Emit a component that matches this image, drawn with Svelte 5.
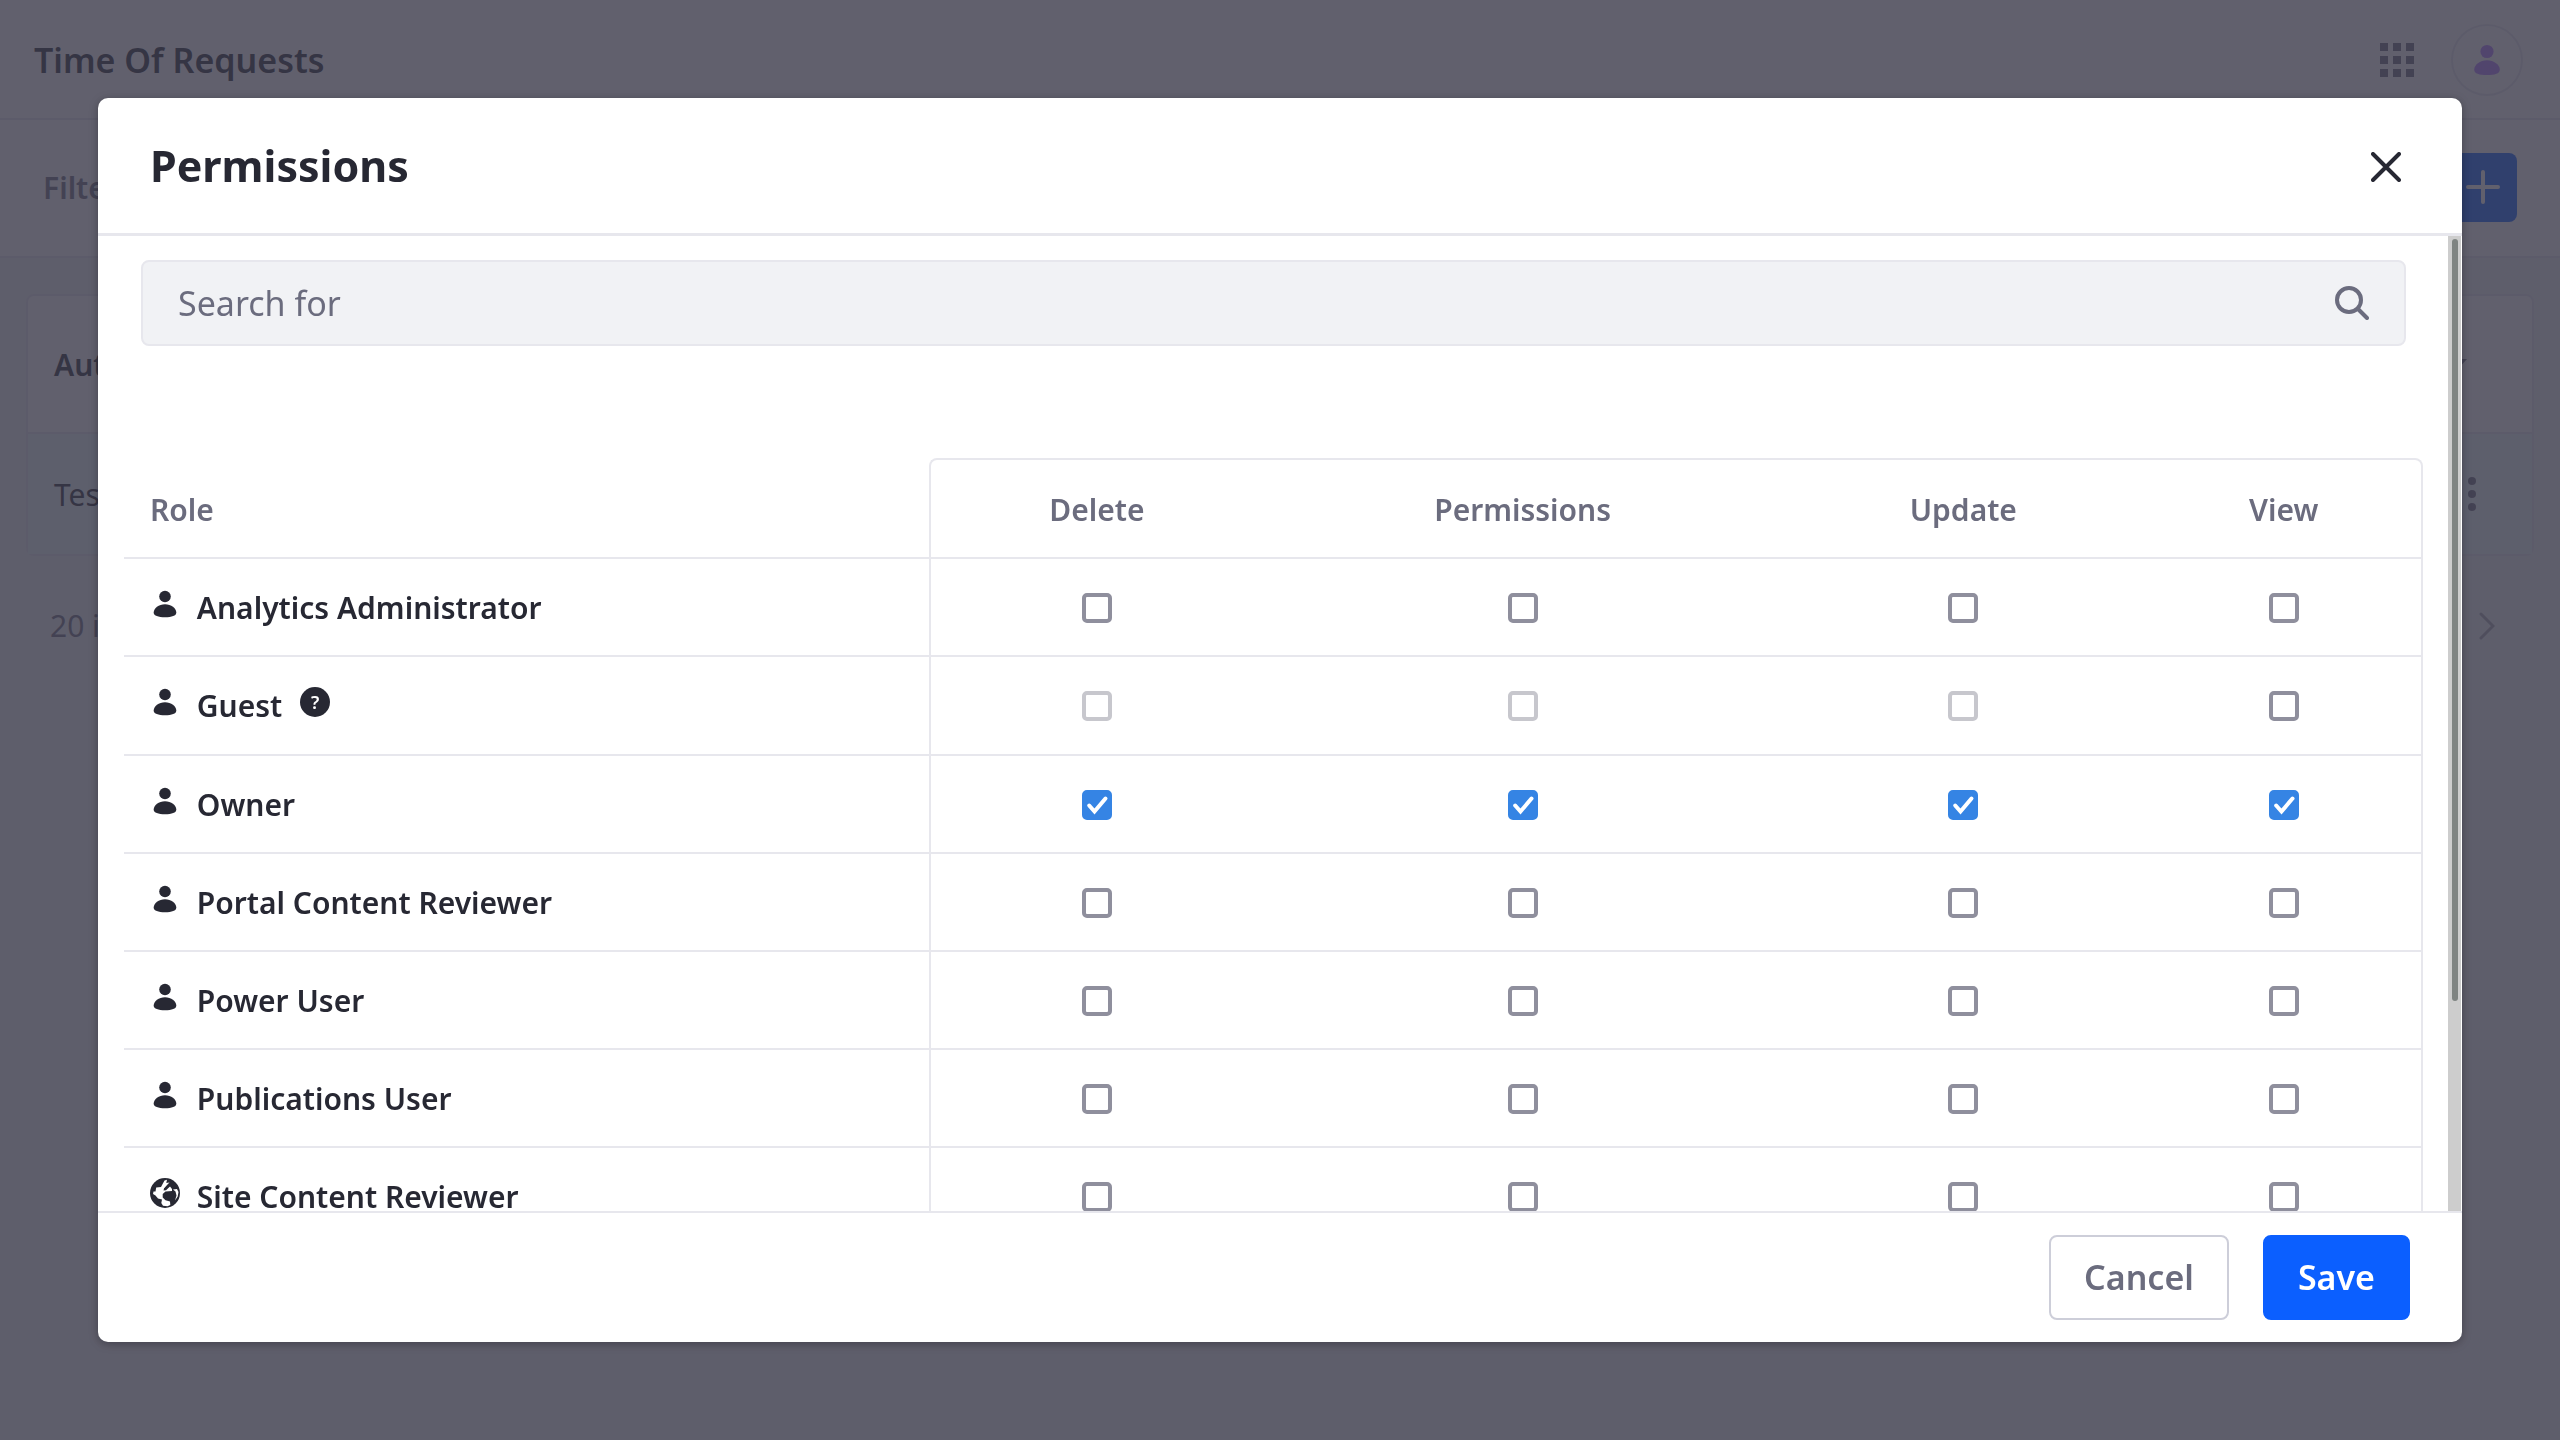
<script lang="ts">
	const actions = ['Delete', 'Permissions', 'Update', 'View'];

	type Role = {
		name: string;
		icon: 'user' | 'globe';
		help?: boolean;
		checked: boolean[];
		locked: boolean[];
	};

	const none = () => [false, false, false, false];

	let roles = $state<Role[]>([
		{ name: 'Analytics Administrator', icon: 'user', checked: none(), locked: none() },
		{ name: 'Guest', icon: 'user', help: true, checked: none(), locked: [true, true, true, false] },
		{ name: 'Owner', icon: 'user', checked: [true, true, true, true], locked: none() },
		{ name: 'Portal Content Reviewer', icon: 'user', checked: none(), locked: none() },
		{ name: 'Power User', icon: 'user', checked: none(), locked: none() },
		{ name: 'Publications User', icon: 'user', checked: none(), locked: none() },
		{ name: 'Site Content Reviewer', icon: 'globe', checked: none(), locked: none() }
	]);

	let query = $state('');
</script>

{#snippet userIcon()}
	<svg class="icon" viewBox="0 0 30 30" aria-hidden="true">
		<circle cx="15" cy="7.5" r="5.8" />
		<path d="M15 15.200c6.200 0 11.300 4 11.300 8.300 0 3.400-4.500 4.700-11.300 4.700S3.700 26.900 3.700 23.500c0-4.300 5.100-8.300 11.300-8.300z" />
	</svg>
{/snippet}

{#snippet globeIcon()}
	<svg class="icon" viewBox="0 0 30 30" aria-hidden="true">
		<circle cx="15" cy="15" r="15" />
		<path
			class="land"
			d="M14.500 2.500 17 1.800 16.300 5 19.500 4.500 14 10.500 13.500 12.500 16 12.200 20 8.500 22 11 22 13 15.500 13.500 12.700 16 12.700 19.500 15.500 22.300 20 23.500 20.300 27 17.500 28.300 13 27.800 11.300 25 12 21.500 8 20.500 5.500 17.500 3 16 3.500 13.500 5.500 13.500 6.200 9.500 11 9z"
		/>
		<path d="M14 10.800 18.700 5.500 19.700 6.500 15.500 11.800z" />
		<path class="land" d="M23 11.500 27 11 28.500 14 27.700 18.500 25 22.500 26.500 17.500 25.500 13.500z" />
	</svg>
{/snippet}

<div class="page">
	<header class="topbar">
		<h1>Time Of Requests</h1>
		<div class="tools">
			<svg class="apps" viewBox="0 0 34 34" aria-hidden="true">
				{#each [0, 13, 26] as y}
					{#each [0, 13, 26] as x}
						<rect {x} {y} width="8" height="8" />
					{/each}
				{/each}
			</svg>
			<div class="avatar">{@render userIcon()}</div>
		</div>
	</header>

	<div class="management">
		<button class="filter">Filter</button>
		<button class="add" aria-label="Add">
			<svg viewBox="0 0 34 34" aria-hidden="true"><path d="M17 2v30M2 17h30" /></svg>
		</button>
	</div>

	<main class="content">
		<table class="entries">
			<tbody>
				<tr>
					<th scope="col">Author</th>
					<th class="end" scope="col" aria-label="Columns">
						<svg class="caret" viewBox="0 0 18 10" aria-hidden="true"><path d="M0 0h18l-9 10z" /></svg>
					</th>
				</tr>
				<tr class="entry">
					<td>Test Test</td>
					<td class="end">
						<svg class="dots" viewBox="0 0 10 34" aria-hidden="true">
							<circle cx="5" cy="4" r="4" />
							<circle cx="5" cy="17" r="4" />
							<circle cx="5" cy="30" r="4" />
						</svg>
					</td>
				</tr>
			</tbody>
		</table>
		<div class="pagination">
			<span>20 items</span>
			<svg class="next" viewBox="0 0 16 28" aria-hidden="true"><path d="M2 2l12 12L2 26" /></svg>
		</div>
	</main>
</div>

<div class="backdrop">
	<div class="modal" role="dialog" aria-modal="true" aria-labelledby="modal-title">
		<div class="modal-header">
			<h2 id="modal-title">Permissions</h2>
			<button class="close" aria-label="Close">
				<svg viewBox="0 0 30 30" aria-hidden="true"><path d="M2 2l26 26M28 2L2 28" /></svg>
			</button>
		</div>

		<div class="modal-body">
			<div class="scroll">
				<form class="search" role="search">
					<input type="text" placeholder="Search for" aria-label="Search for" bind:value={query} />
					<button type="submit" aria-label="Search">
						<svg viewBox="0 0 34 34" aria-hidden="true">
							<circle cx="14" cy="14" r="12" />
							<path d="M23 23l9 9" />
						</svg>
					</button>
				</form>

				<table class="permissions">
					<thead>
						<tr>
							<th class="role" scope="col">Role</th>
							{#each actions as action}
								<th scope="col">{action}</th>
							{/each}
						</tr>
					</thead>
					<tbody>
						{#each roles as role}
							<tr>
								<th class="role" scope="row">
									{#if role.icon === 'globe'}{@render globeIcon()}{:else}{@render userIcon()}{/if}
									<span class="name">{role.name}</span>
									{#if role.help}
										<span class="help">?</span>
									{/if}
								</th>
								{#each actions as action, i}
									<td>
										<label class="check">
											<input
												type="checkbox"
												aria-label="{action} {role.name}"
												bind:checked={role.checked[i]}
												disabled={role.locked[i]}
											/>
											<svg viewBox="0 0 30 30" aria-hidden="true"><path d="M7.200 15.500l5.300 6L23.500 8.500" /></svg>
										</label>
									</td>
								{/each}
							</tr>
						{/each}
					</tbody>
				</table>
			</div>
			<div class="track"><div class="thumb"></div></div>
		</div>

		<div class="modal-footer">
			<button class="btn">Cancel</button>
			<button class="btn primary">Save</button>
		</div>
	</div>
</div>

<style>
	:global(body) {
		background: #f1f2f5;
		color: #272833;
		font-family: 'Noto Sans', 'Open Sans', sans-serif;
		font-size: 30px;
		line-height: 1.5;
	}
	h1,
	h2 {
		margin: 0;
		font-weight: 600;
	}
	button,
	input {
		font: inherit;
		color: inherit;
	}
	button {
		padding: 0;
		border: 0;
		background: none;
	}
	svg {
		display: block;
	}

	/* page behind the dialog */
	.topbar,
	.management {
		box-sizing: border-box;
		display: flex;
		align-items: center;
		justify-content: space-between;
		background: #fff;
		border-bottom: 2px solid #e7e7ed;
	}
	.topbar {
		height: 120px;
		padding: 2px 37px 0 34px;
	}
	h1 {
		font-size: 34px;
	}
	.tools {
		display: flex;
		align-items: center;
		gap: 37px;
	}
	.apps {
		width: 34px;
		fill: #6b6c7e;
	}
	.avatar {
		display: flex;
		align-items: center;
		justify-content: center;
		width: 68px;
		height: 68px;
		border: 2px solid #e7e7ed;
		border-radius: 50%;
		fill: #af78ff;
	}
	.avatar .icon {
		width: 34px;
		height: 34px;
	}
	.management {
		height: 138px;
		padding: 0 43px 2px;
	}
	.filter {
		color: #6b6c7e;
		font-weight: 600;
	}
	.add {
		display: flex;
		align-items: center;
		justify-content: center;
		width: 69px;
		height: 69px;
		border-radius: 8px;
		background: #0b5fff;
	}
	.add svg {
		width: 34px;
		stroke: #fff;
		stroke-width: 4;
		stroke-linecap: round;
	}
	.content {
		padding: 36px 26px;
	}
	.entries {
		width: 100%;
		border: 2px solid #e7e7ed;
		border-radius: 8px;
		border-spacing: 0;
		background: #fff;
	}
	.entries th,
	.entries td {
		height: 120px;
		padding: 0 26px;
		text-align: left;
	}
	.entries th {
		height: 136px;
		border-bottom: 2px solid #e7e7ed;
		font-weight: 600;
	}
	.entry {
		background: #ebf7fb;
	}
	.entries .end {
		padding-right: 55px;
	}
	.entries th.end {
		padding-right: 65px;
	}
	.end svg {
		margin-left: auto;
		fill: #6b6c7e;
	}
	.caret {
		width: 18px;
	}
	.dots {
		width: 10px;
	}
	.pagination {
		display: flex;
		align-items: center;
		justify-content: space-between;
		margin-top: 47px;
		padding: 0 39px 0 24px;
		color: #6b6c7e;
	}
	.next {
		width: 16px;
		fill: none;
		stroke: #393a4a;
		stroke-width: 3;
		stroke-linecap: round;
		opacity: 0.4;
	}

	/* dialog */
	.backdrop {
		position: fixed;
		inset: 0;
		box-sizing: border-box;
		display: flex;
		padding: 98px;
		background: rgba(57, 56, 72, 0.8);
	}
	.modal {
		flex: 1;
		display: flex;
		flex-direction: column;
		min-width: 0;
		border-radius: 10px;
		background: #fff;
		box-shadow: 0 2px 10px rgba(0, 0, 0, 0.3);
	}
	.modal-header {
		box-sizing: border-box;
		display: flex;
		align-items: center;
		justify-content: space-between;
		height: 138px;
		padding: 2px 61px 0 52px;
		border-bottom: 3px solid #e7e7ed;
	}
	h2 {
		font-size: 43px;
		font-weight: 700;
	}
	.close svg {
		width: 30px;
		stroke: #272833;
		stroke-width: 4;
		stroke-linecap: round;
	}
	.modal-body {
		flex: 1;
		display: flex;
		min-height: 0;
		padding-right: 1px;
	}
	.scroll {
		flex: 1;
		overflow: hidden;
		padding: 24px 25px 0 26px;
	}
	.track {
		box-sizing: border-box;
		width: 13px;
		padding: 3px 3px 0 4px;
		background: #cdcdcd;
	}
	.thumb {
		height: 78.4%;
		border-radius: 3px;
		background: #7f8482;
	}
	.search {
		box-sizing: border-box;
		display: flex;
		align-items: center;
		height: 86px;
		margin: 0 17px 112px;
		padding: 0 35px;
		border: 2px solid #e7e7ed;
		border-radius: 8px;
		background: #f1f2f5;
		color: #6b6c7e;
	}
	.search input {
		flex: 1;
		padding: 0;
		border: 0;
		background: none;
		font-size: 34px;
		outline: none;
	}
	.search input::placeholder {
		color: #6b6c7e;
		opacity: 1;
	}
	.search svg {
		width: 34px;
		fill: none;
		stroke: #6b6c7e;
		stroke-width: 4;
		stroke-linecap: round;
	}

	.permissions {
		width: 100%;
		border-spacing: 0;
		line-height: 1.54;
	}
	.permissions th,
	.permissions td {
		padding: 26px 32px 24px;
		border-bottom: 2px solid #e7e7ed;
		font-weight: 600;
		text-align: center;
		white-space: nowrap;
	}
	.permissions thead th {
		padding-top: 27px;
		border-top: 2px solid #e7e7ed;
		color: #6b6c7e;
	}
	.permissions .role {
		width: 35%;
		box-sizing: border-box;
		padding-left: 26px;
		text-align: left;
	}
	.permissions thead .role {
		border-top-color: transparent;
	}
	.permissions th:nth-child(2),
	.permissions td:nth-child(2) {
		padding-right: 31px;
		padding-left: 29px;
		border-left: 2px solid #e7e7ed;
	}
	.permissions th:last-child,
	.permissions td:last-child {
		padding-right: 29px;
		padding-left: 29px;
		border-right: 2px solid #e7e7ed;
	}
	.permissions thead th:nth-child(2) {
		border-top-left-radius: 8px;
	}
	.permissions thead th:last-child {
		border-top-right-radius: 8px;
	}
	.icon {
		width: 30px;
		height: 30px;
	}
	.role .icon {
		display: inline-block;
		fill: #272833;
	}
	.icon .land {
		fill: #fff;
	}
	.name {
		margin-left: 9px;
	}
	.help {
		display: inline-block;
		width: 30px;
		height: 30px;
		margin-left: 10px;
		border-radius: 50%;
		background: #272833;
		color: #fff;
		font-size: 18px;
		font-weight: 600;
		line-height: 30px;
		text-align: center;
		vertical-align: 8px;
	}
	.check {
		position: relative;
		display: block;
		width: 30px;
		height: 30px;
		margin: 0 auto;
	}
	.check input {
		appearance: none;
		display: block;
		box-sizing: border-box;
		width: 30px;
		height: 30px;
		margin: 0;
		border: 4px solid #8f8f9d;
		border-radius: 5px;
		background: #fff;
	}
	.check input:disabled {
		border-color: #c7c7cd;
	}
	.check input:checked {
		border-color: #3584e4;
		background: #3584e4;
	}
	.check svg {
		position: absolute;
		inset: 0;
		display: none;
		fill: none;
		stroke: #fff;
		stroke-width: 4;
		stroke-linecap: round;
		pointer-events: none;
	}
	.check input:checked + svg {
		display: block;
	}

	.modal-footer {
		display: flex;
		align-items: center;
		justify-content: flex-end;
		gap: 34px;
		height: 129px;
		padding: 0 52px;
		border-top: 2px solid #e7e7ed;
	}
	.btn {
		height: 85px;
		padding: 0 33px;
		border: 2px solid #cdced9;
		border-radius: 8px;
		color: #6b6c7e;
		font-size: 34px;
		font-weight: 600;
	}
	.primary {
		border-color: #0b5fff;
		background: #0b5fff;
		color: #fff;
	}
</style>
